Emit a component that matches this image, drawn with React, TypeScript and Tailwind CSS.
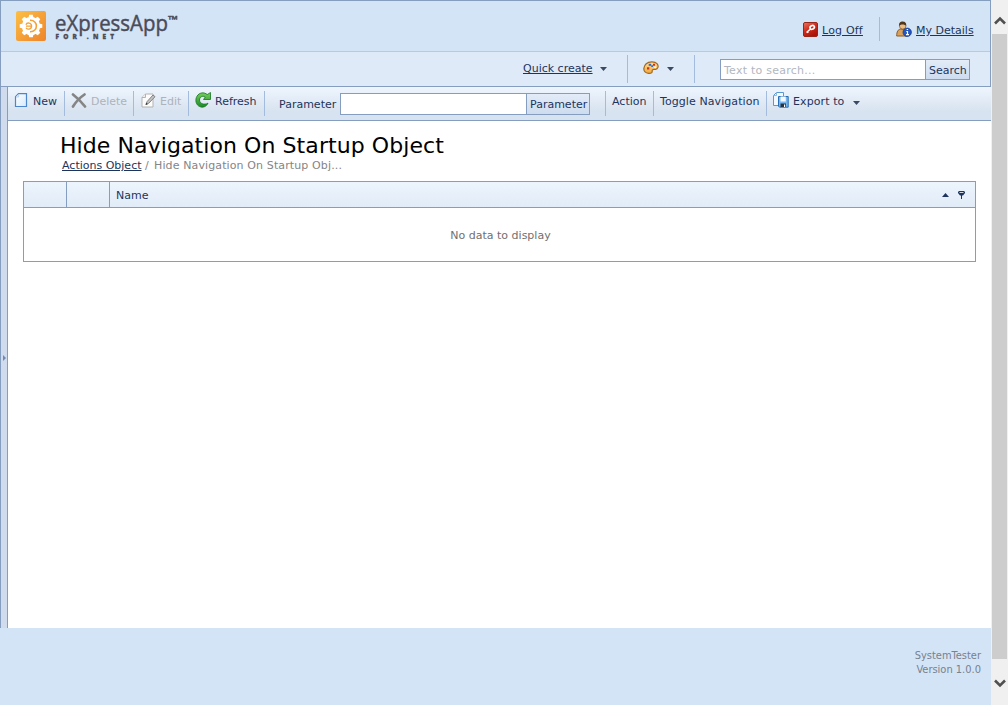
import React from "react";

const Separator = ({ className }: { className: string }) => (
  <div className={`w-px shrink-0 bg-[#a3bbdc] ${className}`} />
);

const Caret = ({ className = "" }: { className?: string }) => (
  <svg className={`shrink-0 ${className}`} width="7" height="4" viewBox="0 0 7 4">
    <path d="M0 0h7L3.5 4z" fill="#3b4a63" />
  </svg>
);

const Logo = () => (
  <svg width="170" height="34" viewBox="0 0 170 34" className="shrink-0 overflow-visible">
    <defs>
      <linearGradient id="logo" x1="0" y1="0" x2="1" y2="1">
        <stop offset="0" stopColor="#fcbf45" />
        <stop offset="1" stopColor="#ee842b" />
      </linearGradient>
    </defs>
    <rect x="0" y="1" width="30" height="30" rx="2" fill="url(#logo)" />
    <g fill="#fff">
      <circle cx="15" cy="16" r="9.200" />
      {[0, 45, 90, 135, 180, 225, 270, 315].map((a) => (
        <path key={a} d="M12.500 8l.7-3.300h3.600l.7 3.300z" transform={`rotate(${a} 15 16)`} />
      ))}
    </g>
    <path d="M14 10.300c8.500-.5 8.500 11.900 0 11.400" fill="none" stroke="#f5a137" strokeWidth="1.600" />
    <path d="M10 14.700c.8-2.600 5.600-2.200 5.600 1.300s-4.600 4-5.600 1.700M10 16.200h5" fill="none" stroke="#f5a137" strokeWidth="1.300" />
    <g fill="#4b4b58" fontFamily="'Open Sans', 'Noto Sans', sans-serif">
      <text x="39" y="21" fontSize="22.500" fontWeight="500" stroke="#4b4b58" strokeWidth=".45" textLength="113" lengthAdjust="spacingAndGlyphs">eXpressApp</text>
      <text x="152" y="13" fontSize="10" fontWeight="700" stroke="#4b4b58" strokeWidth=".35" textLength="10" lengthAdjust="spacingAndGlyphs">™</text>
      <text x="39.500" y="29" fontSize="6.500" fontWeight="800" stroke="#4b4b58" strokeWidth=".3" letterSpacing="3.500" textLength="62">FOR .NET</text>
    </g>
  </svg>
);

const KeyIcon = () => (
  <svg width="15" height="15" viewBox="0 0 15 15" className="shrink-0">
    <defs>
      <linearGradient id="key" x1="0" y1="0" x2="0.600" y2="1">
        <stop offset="0" stopColor="#ea7766" />
        <stop offset="0.500" stopColor="#cf2d1d" />
        <stop offset="1" stopColor="#ab1208" />
      </linearGradient>
    </defs>
    <rect x="0.500" y="0.500" width="14" height="14" rx="1.500" fill="url(#key)" stroke="#98251a" />
    <ellipse cx="9.200" cy="5.400" rx="2.300" ry="1.800" transform="rotate(-25 9.200 5.400)" fill="none" stroke="#fff" strokeWidth="1.600" />
    <path d="M7.500 7L3.500 10.500M4.300 9.800l1 1" stroke="#fff" strokeWidth="1.500" />
  </svg>
);

const UserIcon = () => (
  <svg width="16" height="16" viewBox="0 0 16 16" className="shrink-0">
    <path d="M.7 15c0-4.500 1.300-6.500 4-7l3 .2c2.500.5 3.300 3 3.300 6.800z" fill="#d9a15b" stroke="#8c5a25" />
    <circle cx="6.700" cy="4.800" r="3.300" fill="#eebd83" stroke="#845426" strokeWidth=".7" />
    <path d="M3.200 5C2.700 1.200 5 .3 7 .5s3.700 1.500 3.100 4.300C8.700 3.300 5.300 2.500 3.200 5z" fill="#51361e" />
    <circle cx="11.200" cy="11.300" r="4.200" fill="#2457c0" stroke="#163f98" strokeWidth=".8" />
    <path d="M10.300 10.500h1.200v3.100M10 13.600h3M10.700 8.500h1.400" stroke="#fff" strokeWidth="1.200" fill="none" />
  </svg>
);

const PaletteIcon = () => (
  <svg width="16" height="14" viewBox="0 0 16 14" className="shrink-0">
    <defs>
      <linearGradient id="palette" x1="0" y1="0" x2="0" y2="1">
        <stop offset="0" stopColor="#ffe1a0" />
        <stop offset="1" stopColor="#f1a73d" />
      </linearGradient>
    </defs>
    <path d="M3.200 2.800C6 .2 11.800.2 14 2.600c2.200 2.700.8 5.500-1.500 5.800-1.500.1-2.300-.4-3.100.6-.7.900.4 1.700-.8 2.700-1.300 1-4.700 1-6.600-.8S.6 5.300 3.200 2.800z" fill="url(#palette)" stroke="#a2681f" strokeWidth="1.200" />
    <path d="M5.700 2.800h2.500v2H5.700z" fill="#2f67c4" />
    <path d="M10 2.800h2v2h-2zM4 6.300h2.300v2.200H4z" fill="#d5301a" />
    <path d="M8.200 4.300h1.800v1.600H8.200z" fill="#386cc0" />
    <circle cx="12.200" cy="6.200" r="1" fill="#fff" />
  </svg>
);

const NewIcon = () => (
  <svg width="14" height="15" viewBox="0 0 14 15" className="shrink-0">
    <defs>
      <linearGradient id="page" x1="0" y1="0" x2="1" y2="1">
        <stop offset="0" stopColor="#fff" />
        <stop offset="1" stopColor="#d6eafb" />
      </linearGradient>
    </defs>
    <path d="M4.500.700h8v12.800h-11V3.700z" fill="url(#page)" stroke="#4e86ce" strokeWidth="1.200" />
    <path d="M2 4h2.700V1.200" fill="#dcebfa" stroke="#a9c8eb" strokeWidth=".8" />
  </svg>
);

const DeleteIcon = () => (
  <svg width="16" height="15" viewBox="0 0 16 15" className="shrink-0">
    <path d="M2 1.500C5 3.800 10.500 9 14 13.500M13.500 1.500C9 4.500 4.500 9.500 2 13.500" fill="none" stroke="#858585" strokeWidth="2.700" strokeLinecap="round" />
  </svg>
);

const EditIcon = () => (
  <svg width="15" height="15" viewBox="0 0 15 15" className="shrink-0">
    <path d="M4.500 1H12v13H1V4.500z" fill="#fcfcfc" stroke="#b2b2b2" />
    <path d="M1 4.500h3.500V1" fill="#eee" stroke="#b2b2b2" />
    <path d="M5 11.300l1-2.600L12 2l2 1.700-6.300 6.600z" fill="#c4c4c4" stroke="#777" strokeWidth=".9" />
    <path d="M4.500 12l.8-2.300 1.500 1.500z" fill="#333" />
  </svg>
);

const RefreshIcon = () => (
  <svg width="17" height="16" viewBox="0 0 17 16" className="shrink-0">
    <defs>
      <linearGradient id="refresh" x1="0" y1="0" x2="0" y2="1">
        <stop offset="0" stopColor="#78d15d" />
        <stop offset="1" stopColor="#198b24" />
      </linearGradient>
    </defs>
    <path d="M12.200 2.600L15.500.500V7.500H8.500L10.300 5C7.500 3.300 4.500 5 4.500 8c0 3.500 4.500 5.300 8.500 3.200C11.500 14.700 7.500 16 4.800 14.600 1 13.200-.3 8 2 4.200 4.300.300 9.300-.100 12.200 2.600z" fill="url(#refresh)" stroke="#147423" strokeWidth=".8" />
  </svg>
);

const ExportIcon = () => (
  <svg width="16" height="16" viewBox="0 0 16 16" className="shrink-0">
    <path d="M3.500.500h7v13h-10v-10z" fill="#f4f9ff" stroke="#5799d2" />
    <path d="M.5 3.500h3v-3" fill="none" stroke="#8bb9e3" />
    <path d="M5.500 4.500h9.700v10.700H6.500l-1-1z" fill="#78b7ee" stroke="#266eb6" />
    <path d="M7.500 4.500h5.300V9.500H7.500z" fill="#f4faff" />
    <path d="M7.500 11.500h5.500v3.500H7.500z" fill="#263340" />
    <path d="M11 12.500h1.200V15H11z" fill="#fff" />
  </svg>
);

const FilterIcon = () => (
  <svg width="7" height="8" viewBox="0 0 7 8" className="shrink-0">
    <path d="M0 1L1 0h5l1 1v1L5 4.500H4V8H3V4.500H2L0 2z" fill="#1d355c" />
    <path d="M1.500 1.500h4" stroke="#fff" strokeWidth=".8" />
  </svg>
);

const Arrow = ({ up = false }: { up?: boolean }) => (
  <svg width="12" height="9" viewBox="0 0 12 9" className="shrink-0">
    <path d={up ? "M1 7.500L6 2.500l5 5" : "M1 1.500L6 6.500l5-5"} fill="none" stroke="#505050" strokeWidth="2.600" />
  </svg>
);

export default function App() {
  return (
    <div className="flex h-[705px] w-[1008px] overflow-hidden bg-white font-['DejaVu_Sans',sans-serif] text-[11px] leading-[14px] whitespace-nowrap text-[#1d355c]">
      <div className="flex w-[991px] shrink-0 flex-col">
        <header className="flex h-[87px] shrink-0 flex-col border border-[#859ebf]">
          <div className="flex h-[51px] shrink-0 border-b border-[#b4cbe6] bg-[#d3e4f6] pl-[15px]">
            <div className="w-[787px] pt-[9px]"><Logo /></div>
            <div className="flex pt-[21px]">
              <KeyIcon />
              <a className="ml-1 w-[57px] pt-[2px] tracking-[0.200px] underline">Log Off</a>
            </div>
            <Separator className="mt-4 h-6" />
            <div className="ml-4 flex pt-5">
              <UserIcon />
              <a className="ml-1 pt-[3px] underline">My Details</a>
            </div>
          </div>
          <div className="flex h-[34px] bg-[#dfeaf8]">
            <a className="ml-[522px] w-[77px] pt-[10px] underline">Quick create</a>
            <Caret className="mt-[15px]" />
            <Separator className="mt-[3px] ml-5 h-7" />
            <div className="flex w-[66px] pl-[15px]">
              <div className="w-6 pt-[9px]"><PaletteIcon /></div>
              <Caret className="mt-[15px]" />
            </div>
            <Separator className="mt-[3px] h-7" />
            <div className="mt-[7px] ml-[25px] flex h-[21px] w-[250px] border border-[#859ebf] bg-white">
              <div className="w-[204px] pt-[4px] pl-[3px] tracking-[0.25px] text-[#b2b7bf]">Text to search...</div>
              <div className="flex-1 border-l border-[#859ebf] bg-linear-to-b from-[#e3ecf8] to-[#cddcef] pt-[4px] pl-[3px]">Search</div>
            </div>
          </div>
        </header>

        <div className="flex h-[541px] shrink-0">
          <aside className="flex w-2 shrink-0 items-center border-x border-[#859ebf] bg-[#d0dcee]">
            <svg className="ml-[2px]" width="3" height="6" viewBox="0 0 3 6"><path d="M0 0l3 3-3 3z" fill="#7189ad" /></svg>
          </aside>
          <main className="flex flex-1 flex-col">
            <div className="flex h-[34px] shrink-0 border-b border-[#859ebf] bg-linear-to-b from-[#eff5fd] to-[#d7e3f0] to-75%">
              <div className="flex w-14 pt-[6px] pl-[6px]"><NewIcon /><span className="ml-[5px] pt-[2px]">New</span></div>
              <Separator className="mt-1 h-[25px]" />
              <div className="flex w-[68px] pt-[6px] pl-[6px] text-[#adb3bb]"><DeleteIcon /><span className="ml-1 pt-[2px]">Delete</span></div>
              <Separator className="mt-1 h-[25px]" />
              <div className="flex w-[54px] pt-[6px] pl-[7px] text-[#adb3bb]"><EditIcon /><span className="ml-1 pt-[2px]">Edit</span></div>
              <Separator className="mt-1 h-[25px]" />
              <div className="flex w-[75px] pt-[5px] pl-[6px]"><RefreshIcon /><span className="ml-[3px] pt-[3px]">Refresh</span></div>
              <Separator className="mt-1 h-[25px]" />
              <span className="w-[75px] pt-[11px] pl-[14px]">Parameter</span>
              <div className="mt-[6px] flex h-[22px] w-[250px] border border-[#859ebf] bg-white">
                <div className="w-[185px]" />
                <div className="flex-1 border-l border-[#859ebf] bg-linear-to-b from-[#e3ecf8] to-[#cddcef] pt-[4px] pl-[3px]">Parameter</div>
              </div>
              <Separator className="mt-1 ml-[15px] h-[25px]" />
              <span className="w-[47px] pt-[8px] pl-[6px]">Action</span>
              <Separator className="mt-1 h-[25px]" />
              <span className="w-28 pt-[8px] pl-[6px] tracking-[0.080px]">Toggle Navigation</span>
              <Separator className="mt-1 h-[25px]" />
              <div className="flex pt-[5px] pl-[6px]"><ExportIcon /><span className="ml-1 w-[60px] pt-[3px] tracking-[0.100px]">Export to</span><Caret className="mt-[9px]" /></div>
            </div>

            <h1 className="mt-[11px] ml-[52px] h-[27px] text-[22px] leading-[27px] tracking-[0.080px] text-black">Hide Navigation On Startup Object</h1>
            <div className="ml-[54px] flex h-[22px] text-[#858585]">
              <a className="w-[83px] text-[#1d355c] underline">Actions Object</a>
              <span className="w-[9px]">/</span>
              <span className="tracking-[0.120px]">Hide Navigation On Startup Obj...</span>
            </div>

            <section className="ml-[15px] flex h-[81px] w-[953px] flex-col border border-[#859ebf]">
              <div className="flex h-[26px] shrink-0 border-b border-[#859ebf] bg-linear-to-b from-[#edf4fc] to-[#e1ecf8]">
                <div className="w-[43px] border-r border-[#859ebf]" />
                <div className="w-[43px] border-r border-[#859ebf]" />
                <div className="flex flex-1 pt-[7px] pl-[6px]">
                  <span className="w-[826px]">Name</span>
                  <svg className="mt-[4px]" width="7" height="4" viewBox="0 0 7 4"><path d="M0 4h7L3.500 0z" fill="#1d355c" /></svg>
                  <div className="mt-[2px] ml-[9px]"><FilterIcon /></div>
                </div>
              </div>
              <div className="flex flex-1 items-center justify-center pt-[2px] pl-[2px] text-[#707070]">No data to display</div>
            </section>
          </main>
        </div>

        <footer className="h-[77px] bg-[#d3e4f6] pt-[21px] pr-[10px] text-right font-['DejaVu_Sans_Condensed','DejaVu_Sans',sans-serif] text-[11px] text-[#78818e] [font-stretch:condensed]">
          <div>SystemTester</div>
          <div>Version 1.0.0</div>
        </footer>
      </div>

      <div className="flex w-[17px] shrink-0 flex-col items-center bg-[#f0f0f0]">
        <div className="h-[34px] pt-4"><Arrow up /></div>
        <div className="h-[625px] w-[15px] bg-[#cdcdcd]" />
        <div className="pt-5"><Arrow /></div>
      </div>
    </div>
  );
}
